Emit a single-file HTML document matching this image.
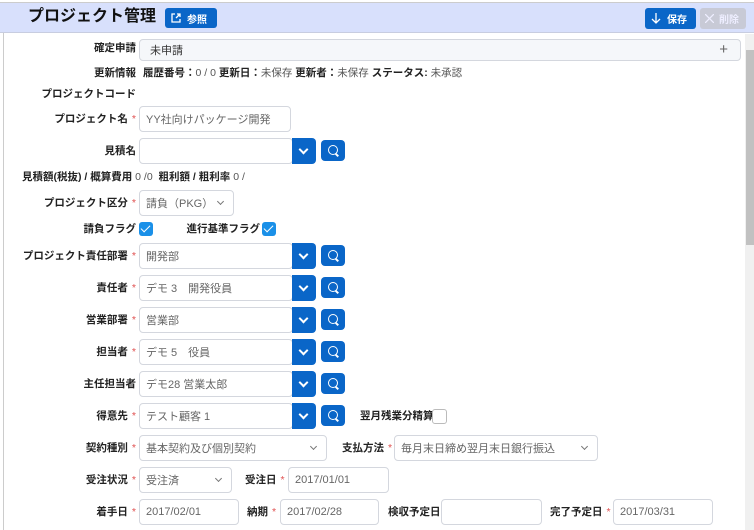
<!DOCTYPE html>
<html><head><meta charset="utf-8"><style>
*{box-sizing:border-box;margin:0;padding:0}
body{width:754px;height:530px;overflow:hidden;background:#fff;font-family:"Liberation Sans","Noto Sans CJK JP",sans-serif;font-size:11px;color:#222;position:relative}
.a{position:absolute}
.hdr{left:0;top:2px;width:754px;height:31px;background:#d8e0fc;border-top:1px solid #ccc;border-bottom:1px solid #c8cde0}
.lb{position:absolute;font-weight:bold;font-size:10.5px;line-height:14px;color:#222;white-space:nowrap;text-align:right}
.st{color:#e05050;margin-left:4px;font-weight:normal}
.in{position:absolute;height:26px;border:1px solid #d4d7de;border-radius:4px;background:#fff;color:#666;padding:0 6px;display:flex;align-items:center;white-space:nowrap;font-size:11px}
.dd{position:absolute;width:24px;height:26px;background:#0a66c8;border-radius:0 4px 4px 0}
.dd:after{content:"";position:absolute;left:8px;top:8px;width:5px;height:5px;border-right:2px solid #fff;border-bottom:2px solid #fff;transform:rotate(45deg)}
.sb{position:absolute;width:24px;height:21px;background:#0a66c8;border-radius:4px}
.sb:before{content:"";position:absolute;left:7px;top:5px;width:8px;height:8px;border:1.6px solid #fff;border-radius:50%}
.sb:after{content:"";position:absolute;left:13.5px;top:14px;width:4px;height:1.6px;background:#fff;transform:rotate(45deg)}
.ch{position:absolute;right:10px;top:8px;width:5px;height:5px;border-right:1px solid #777;border-bottom:1px solid #777;transform:rotate(45deg)}
.cb{position:absolute;width:14px;height:14px;border-radius:3px;background:#1a90e8}
.cb:after{content:"";position:absolute;left:4px;top:1px;width:4px;height:8px;border-right:1.6px solid #fff;border-bottom:1.6px solid #fff;transform:rotate(45deg)}
.v{position:absolute;white-space:nowrap;color:#555;line-height:14px}
.btn{position:absolute;border-radius:3px;font-weight:bold;font-size:10px;display:flex;align-items:center}
</style></head><body>
<div class="a" style="left:3px;top:33px;width:1px;height:497px;background:#ccc"></div>
<div class="a hdr"></div>
<div class="a" style="left:28px;top:6px;font-size:16px;line-height:22px;font-weight:bold;color:#111">プロジェクト管理</div>
<div class="btn" style="left:165px;top:8px;width:52px;height:20px;background:#0a66c8;color:#fff;padding-left:22px">参照
<svg class="a" style="left:6px;top:5px" width="10" height="10" viewBox="0 0 10 10"><path d="M4 1H1V9H9V6M6 1H9V4M9 1L5 5" fill="none" stroke="#fff" stroke-width="1.3"/></svg></div>
<div class="btn" style="left:645px;top:8px;width:51px;height:21px;background:#0a66c8;color:#fff;padding-left:22px">保存
<svg class="a" style="left:6px;top:5px" width="10" height="11" viewBox="0 0 10 11"><path d="M5 0V10M1 6L5 10L9 6" fill="none" stroke="#fff" stroke-width="1.3"/></svg></div>
<div class="btn" style="left:700px;top:8px;width:46px;height:21px;background:#c8cad6;color:#eef;padding-left:19px">削除
<svg class="a" style="left:5px;top:6px" width="9" height="9" viewBox="0 0 9 9"><path d="M0 0L9 9M9 0L0 9" stroke="#eef" stroke-width="1.3"/></svg></div>
<div class="a" style="left:745px;top:34px;width:9px;height:496px;background:#f0f0f0"></div>
<div class="a" style="left:746px;top:50px;width:8px;height:195px;background:#c1c1c1"></div>

<div class="in" style="left:139px;top:39px;width:602px;height:22px;background:#f5f7fa;color:#333;padding-left:10px">未申請<span style="position:absolute;right:12px;top:1px;font-size:15px;line-height:18px;color:#666">+</span></div>
<div class="lb" style="right:618px;top:41px">確定申請</div>
<div class="lb" style="right:618px;top:66px">更新情報</div>
<div class="v" style="left:143px;top:66px;font-size:10.5px"><b style="color:#222">履歴番号：</b>0 / 0 <b style="color:#222">更新日：</b>未保存 <b style="color:#222">更新者：</b>未保存 <b style="color:#222">ステータス:</b> 未承認</div>
<div class="lb" style="right:618px;top:87px">プロジェクトコード</div>

<div class="lb" style="right:618px;top:112px">プロジェクト名<span class="st">*</span></div>
<div class="in" style="left:139px;top:106px;width:152px">YY社向けパッケージ開発</div>

<div class="lb" style="right:618px;top:144px">見積名</div>
<div class="in" style="left:139px;top:138px;width:154px"></div><div class="dd" style="left:292px;top:138px"></div><div class="sb" style="left:321px;top:140px"></div>

<div class="v" style="left:22px;top:170px;font-size:10.5px"><b style="color:#222">見積額(税抜) / 概算費用</b> 0 /0 &nbsp;<b style="color:#222">粗利額 / 粗利率</b> 0 /</div>

<div class="lb" style="right:618px;top:196px">プロジェクト区分<span class="st">*</span></div>
<div class="in" style="left:139px;top:190px;width:95px">請負（PKG）<span class="ch"></span></div>

<div class="lb" style="right:618px;top:222px">請負フラグ</div><div class="cb" style="left:139px;top:222px"></div>
<div class="lb" style="right:494px;top:222px">進行基準フラグ</div><div class="cb" style="left:262px;top:222px"></div>

<div class="lb" style="right:618px;top:249px">プロジェクト責任部署<span class="st">*</span></div>
<div class="in" style="left:139px;top:243px;width:154px">開発部</div><div class="dd" style="left:292px;top:243px"></div><div class="sb" style="left:321px;top:245px"></div>
<div class="lb" style="right:618px;top:281px">責任者<span class="st">*</span></div>
<div class="in" style="left:139px;top:275px;width:154px">デモ 3　開発役員</div><div class="dd" style="left:292px;top:275px"></div><div class="sb" style="left:321px;top:277px"></div>
<div class="lb" style="right:618px;top:313px">営業部署<span class="st">*</span></div>
<div class="in" style="left:139px;top:307px;width:154px">営業部</div><div class="dd" style="left:292px;top:307px"></div><div class="sb" style="left:321px;top:309px"></div>
<div class="lb" style="right:618px;top:345px">担当者<span class="st">*</span></div>
<div class="in" style="left:139px;top:339px;width:154px">デモ 5　役員</div><div class="dd" style="left:292px;top:339px"></div><div class="sb" style="left:321px;top:341px"></div>
<div class="lb" style="right:618px;top:377px">主任担当者</div>
<div class="in" style="left:139px;top:371px;width:154px">デモ28 営業太郎</div><div class="dd" style="left:292px;top:371px"></div><div class="sb" style="left:321px;top:373px"></div>
<div class="lb" style="right:618px;top:409px">得意先<span class="st">*</span></div>
<div class="in" style="left:139px;top:403px;width:154px">テスト顧客 1</div><div class="dd" style="left:292px;top:403px"></div><div class="sb" style="left:321px;top:405px"></div>
<div class="lb" style="left:360px;top:409px">翌月残業分精算</div>
<div class="a" style="left:432px;top:409px;width:15px;height:15px;border:1px solid #bbb;border-radius:3px;background:#fff"></div>

<div class="lb" style="right:618px;top:441px">契約種別<span class="st">*</span></div>
<div class="in" style="left:139px;top:435px;width:188px">基本契約及び個別契約<span class="ch"></span></div>
<div class="lb" style="left:342px;top:441px">支払方法<span class="st">*</span></div>
<div class="in" style="left:394px;top:435px;width:204px">毎月末日締め翌月末日銀行振込<span class="ch"></span></div>

<div class="lb" style="right:618px;top:473px">受注状況<span class="st">*</span></div>
<div class="in" style="left:139px;top:467px;width:93px">受注済<span class="ch"></span></div>
<div class="lb" style="left:245px;top:473px">受注日<span class="st">*</span></div>
<div class="in" style="left:288px;top:467px;width:101px">2017/01/01</div>

<div class="lb" style="right:618px;top:505px">着手日<span class="st">*</span></div>
<div class="in" style="left:139px;top:499px;width:100px">2017/02/01</div>
<div class="lb" style="left:247px;top:505px">納期<span class="st">*</span></div>
<div class="in" style="left:280px;top:499px;width:99px">2017/02/28</div>
<div class="lb" style="left:388px;top:505px">検収予定日</div>
<div class="in" style="left:441px;top:499px;width:101px"></div>
<div class="lb" style="left:550px;top:505px">完了予定日<span class="st">*</span></div>
<div class="in" style="left:613px;top:499px;width:100px">2017/03/31</div>
</body></html>
